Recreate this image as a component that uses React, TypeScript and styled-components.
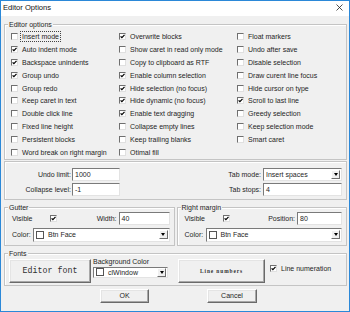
import React from "react";
import styled, { createGlobalStyle, css } from "styled-components";

const Global = createGlobalStyle`
  html, body { margin: 0; padding: 0; background: #ffffff; }
  body { font-family: "Liberation Sans", Arial, sans-serif; }
`;

const Window = styled.div`
  width: 350px;
  height: 312px;
  box-sizing: border-box;
  border: 1px solid #2b88d8;
  background: #f0f0f0;
  display: flex;
  flex-direction: column;
  overflow: hidden;
  font-size: 7px;
  color: #1e1e1e;
`;

const TitleBar = styled.div`
  height: 15px;
  flex: none;
  background: #ffffff;
  display: flex;
  align-items: center;
  justify-content: space-between;
  padding: 0 6px 2px 2px;
  box-sizing: border-box;
  font-size: 7.6px;
  color: #111;
`;

const Body = styled.div`
  flex: 1;
  display: flex;
  flex-direction: column;
  padding: 0 2px 0 3px;
`;

const Group = styled.div<{ $mt: number }>`
  position: relative;
  margin-top: ${(p) => p.$mt}px;
  border: 1px solid #c4c4c4;
  box-shadow: inset 1px 1px 0 #ffffff;
`;

const Caption = styled.span`
  position: absolute;
  top: -5px;
  left: 3px;
  padding: 0 1px;
  background: #f0f0f0;
  line-height: 9px;
  font-size: 7px;
`;

const OptionsGrid = styled.div`
  display: grid;
  grid-template-columns: 108px 118px 1fr;
  grid-template-rows: repeat(10, 12.8px);
  grid-auto-flow: column;
  padding: 5.6px 0 0.4px 6px;
`;

const CheckItem = styled.div<{ $mt?: number; $ml?: number }>`
  display: flex;
  align-items: center;
  gap: 4px;
  white-space: nowrap;
  height: 12.8px;
  margin-top: ${(p) => p.$mt ?? 0}px;
  margin-left: ${(p) => p.$ml ?? 0}px;
`;

const Box = styled.span`
  width: 7px;
  height: 7px;
  box-sizing: border-box;
  flex: none;
  background: #ffffff;
  border: 1px solid;
  border-color: #6f6f6f #e0e0e0 #e0e0e0 #6f6f6f;
  display: flex;
  align-items: center;
  justify-content: center;
`;

const ItemText = styled.span<{ $focus?: boolean }>`
  ${(p) =>
    p.$focus &&
    css`
      outline: 1px dotted #444;
      outline-offset: 1px;
    `}
`;

const Check = ({ on }: { on?: boolean }) => (
  <Box>
    {on && (
      <svg width="5" height="5" viewBox="0 0 5 5">
        <path d="M0.6 2.3 L1.9 3.7 L4.5 0.9" fill="none" stroke="#000" strokeWidth="1.2" />
      </svg>
    )}
  </Box>
);

const Option = ({ label, on, focus }: { label: string; on?: boolean; focus?: boolean }) => (
  <CheckItem>
    <Check on={on} />
    <ItemText $focus={focus}>{label}</ItemText>
  </CheckItem>
);

const FieldsGrid = styled.div`
  display: grid;
  grid-template-columns: 67px 48px 1fr 79px;
  grid-template-rows: 13px 13px;
  row-gap: 2px;
  padding: 6px 4px 3px 0;
`;

const FieldLabel = styled.span<{ $pr?: number }>`
  text-align: right;
  line-height: 13px;
  padding-right: ${(p) => p.$pr ?? 1}px;
  white-space: nowrap;
`;

const Edit = styled.div<{ $w?: number }>`
  height: 13px;
  box-sizing: border-box;
  background: #ffffff;
  border: 1px solid;
  border-color: #7a7a7a #e3e3e3 #e3e3e3 #7a7a7a;
  padding-left: 2px;
  line-height: 11px;
  white-space: nowrap;
  ${(p) => (p.$w ? `width: ${p.$w}px; flex: none;` : "")}
`;

const Combo = styled.div<{ $h?: number }>`
  height: ${(p) => p.$h ?? 14}px;
  box-sizing: border-box;
  background: #ffffff;
  border: 1px solid;
  border-color: #7a7a7a #e3e3e3 #e3e3e3 #7a7a7a;
  display: flex;
  align-items: center;
  padding-left: 2px;
  gap: 4px;
  flex: 1;
  min-width: 0;
`;

const ComboText = styled.span`
  flex: 1;
  white-space: nowrap;
`;

const DropBtn = styled.span`
  width: 9px;
  height: 9px;
  margin-right: 1px;
  box-sizing: border-box;
  flex: none;
  background: #f0f0f0;
  border: 1px solid;
  border-color: #ffffff #6d6d6d #6d6d6d #ffffff;
  display: flex;
  align-items: center;
  justify-content: center;
  &::after {
    content: "";
    border-left: 2.5px solid transparent;
    border-right: 2.5px solid transparent;
    border-top: 3px solid #000;
  }
`;

const Swatch = styled.span`
  width: 8px;
  height: 8px;
  box-sizing: border-box;
  flex: none;
  border: 1px solid #555;
  background: #ffffff;
`;

const MarginRow = styled.div`
  display: grid;
  grid-template-columns: 1fr 1fr;
  column-gap: 2px;
  margin-top: 7px;
`;

const MarginBody = styled.div`
  display: flex;
  flex-direction: column;
  gap: 3px;
  padding: 4px 4px 3px 7px;
`;

const Line = styled.div<{ $h: number }>`
  display: flex;
  align-items: center;
  height: ${(p) => p.$h}px;
`;

const FixedLabel = styled.span<{ $w: number }>`
  width: ${(p) => p.$w}px;
  flex: none;
  white-space: nowrap;
`;

const Spacer = styled.span`
  flex: 1;
`;

const InlineLabel = styled.span`
  margin-right: 2px;
  white-space: nowrap;
`;

const FontsRow = styled.div`
  display: flex;
  align-items: flex-start;
  padding: 5px 0 2px 4px;
`;

const Button3D = styled.div<{ $w: number; $h: number; $ml?: number }>`
  width: ${(p) => p.$w}px;
  height: ${(p) => p.$h}px;
  margin-left: ${(p) => p.$ml ?? 0}px;
  box-sizing: border-box;
  flex: none;
  background: #f0f0f0;
  border: 1px solid;
  border-color: #ffffff #6a6a6a #6a6a6a #ffffff;
  box-shadow: inset -1px -1px 0 #a8a8a8, inset 1px 1px 0 #e4e4e4;
  display: flex;
  align-items: center;
  justify-content: center;
  white-space: nowrap;
`;

const MonoText = styled.span`
  font-family: "Liberation Mono", "Courier New", monospace;
  font-size: 8.3px;
  color: #303030;
`;

const TinyText = styled.span`
  font-family: "Liberation Serif", "Times New Roman", serif;
  font-size: 5.4px;
  letter-spacing: 0.9px;
  font-weight: bold;
  color: #333;
`;

const BgColumn = styled.div`
  width: 75px;
  margin-left: 2px;
  display: flex;
  flex-direction: column;
`;

const BgCaption = styled.span`
  line-height: 5px;
  margin-bottom: 3px;
  white-space: nowrap;
`;

const ButtonBar = styled.div`
  display: flex;
  gap: 58px;
  padding-left: 96px;
  margin-top: 3px;
`;

const col1: [string, boolean][] = [
  ["Insert mode", false],
  ["Auto indent mode", true],
  ["Backspace unindents", true],
  ["Group undo", true],
  ["Group redo", false],
  ["Keep caret in text", false],
  ["Double click line", false],
  ["Fixed line height", false],
  ["Persistent blocks", false],
  ["Word break on right margin", false],
];
const col2: [string, boolean][] = [
  ["Overwrite blocks", true],
  ["Show caret in read only mode", false],
  ["Copy to clipboard as RTF", false],
  ["Enable column selection", true],
  ["Hide selection (no focus)", true],
  ["Hide dynamic (no focus)", true],
  ["Enable text dragging", true],
  ["Collapse empty lines", false],
  ["Keep trailing blanks", false],
  ["Otimal fill", false],
];
const col3: [string, boolean][] = [
  ["Float markers", false],
  ["Undo after save", false],
  ["Disable selection", false],
  ["Draw curent line focus", false],
  ["Hide cursor on type", false],
  ["Scroll to last line", true],
  ["Greedy selection", false],
  ["Keep selection mode", false],
  ["Smart caret", false],
];

const ColorCombo = ({ text, h }: { text: string; h?: number }) => (
  <Combo $h={h}>
    <Swatch />
    <ComboText>{text}</ComboText>
    <DropBtn />
  </Combo>
);

const MarginBox = ({
  title,
  field,
  value,
  w,
}: {
  title: string;
  field: string;
  value: string;
  w: number;
}) => (
  <Group $mt={0}>
    <Caption>{title}</Caption>
    <MarginBody>
      <Line $h={13}>
        <FixedLabel $w={38}>Visible</FixedLabel>
        <Check on />
        <Spacer />
        <InlineLabel>{field}</InlineLabel>
        <Edit $w={w}>{value}</Edit>
      </Line>
      <Line $h={14}>
        <FixedLabel $w={21}>Color:</FixedLabel>
        <ColorCombo text="Btn Face" />
      </Line>
    </MarginBody>
  </Group>
);

export default function App() {
  return (
    <>
      <Global />
      <Window>
        <TitleBar>
          <span>Editor Options</span>
          <svg width="7" height="7" viewBox="0 0 7 7">
            <path d="M0.5 0.5 L6.5 6.5 M6.5 0.5 L0.5 6.5" stroke="#222" strokeWidth="0.8" />
          </svg>
        </TitleBar>
        <Body>
          <Group $mt={8}>
            <Caption>Editor options</Caption>
            <OptionsGrid>
              {col1.map(([l, on], i) => (
                <Option key={"a" + l} label={l} on={on} focus={i === 0} />
              ))}
              {col2.map(([l, on]) => (
                <Option key={"b" + l} label={l} on={on} />
              ))}
              {col3.map(([l, on]) => (
                <Option key={"c" + l} label={l} on={on} />
              ))}
            </OptionsGrid>
          </Group>

          <Group $mt={1}>
            <FieldsGrid>
              <FieldLabel>Undo limit:</FieldLabel>
              <Edit>1000</Edit>
              <FieldLabel $pr={2}>Tab mode:</FieldLabel>
              <Combo $h={13}>
                <ComboText>Insert spaces</ComboText>
                <DropBtn />
              </Combo>
              <FieldLabel>Collapse level:</FieldLabel>
              <Edit>-1</Edit>
              <FieldLabel $pr={2}>Tab stops:</FieldLabel>
              <Edit>4</Edit>
            </FieldsGrid>
          </Group>

          <MarginRow>
            <MarginBox title="Gutter" field="Width:" value="40" w={51} />
            <MarginBox title="Right margin" field="Position:" value="80" w={45} />
          </MarginRow>

          <Group $mt={7}>
            <Caption>Fonts</Caption>
            <FontsRow>
              <Button3D $w={82} $h={24}>
                <MonoText>Editor font</MonoText>
              </Button3D>
              <BgColumn>
                <BgCaption>Background Color</BgCaption>
                <ColorCombo text="clWindow" />
              </BgColumn>
              <Button3D $w={87} $h={24} $ml={10}>
                <TinyText>Line numbers</TinyText>
              </Button3D>
              <CheckItem $mt={3} $ml={5}>
                <Check on />
                <span>Line numeration</span>
              </CheckItem>
            </FontsRow>
          </Group>

          <ButtonBar>
            <Button3D $w={49} $h={14}>OK</Button3D>
            <Button3D $w={50} $h={14}>Cancel</Button3D>
          </ButtonBar>
        </Body>
      </Window>
    </>
  );
}
